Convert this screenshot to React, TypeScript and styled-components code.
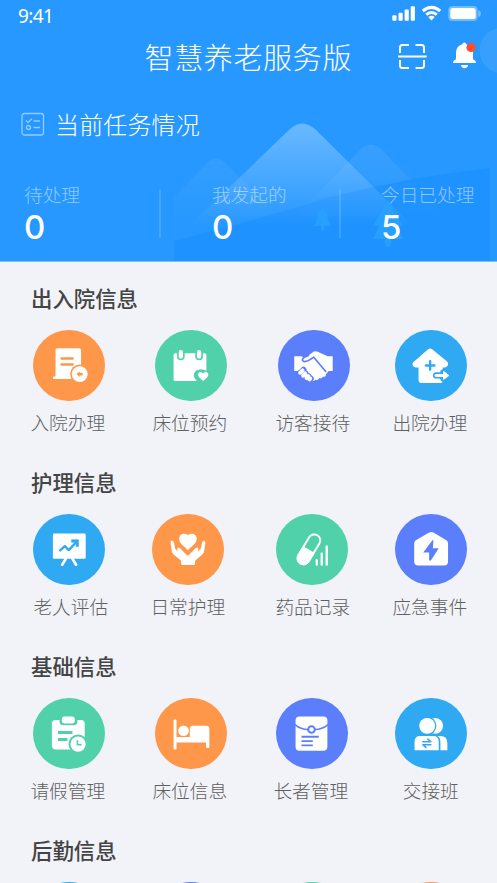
import React from "react";
import styled, { createGlobalStyle } from "styled-components";

const GlobalStyle = createGlobalStyle`
  * { box-sizing: border-box; }
  html, body { margin: 0; padding: 0; background: #f2f3f9; }
  body { font-family: "Noto Sans CJK SC", "Noto Sans", sans-serif; }
`;

const C = { orange: "#ff974b", green: "#50d1aa", indigo: "#5b7ffb", sky: "#2faaf2" };

const Screen = styled.div`
  width: 497px;
  height: 883px;
  overflow: hidden;
  background: #f2f3f9;
`;
const Header = styled.header`
  position: relative;
  height: 262px;
  background: #2698ff;
  color: #fff;
  overflow: hidden;
`;
const Scenery = styled.svg`
  position: absolute;
  inset: 0;
  display: block;
`;
const HeaderContent = styled.div`
  position: relative;
`;
const StatusBar = styled.div`
  display: flex;
  justify-content: space-between;
  height: 32px;
  padding: 0 15px 0 18px;
`;
const Clock = styled.span`
  font: 400 19px/32px "Noto Sans", sans-serif;
  letter-spacing: -0.6px;
`;
const StatusIcons = styled.svg`
  display: block;
  width: 92px;
  height: 32px;
`;
const TitleBar = styled.div`
  display: flex;
  align-items: flex-start;
  height: 50px;
  padding-left: 144.5px;
`;
const Title = styled.h1`
  margin: 0;
  width: 249.5px;
  font-size: 29px;
  line-height: 48px;
  font-weight: 300;
  letter-spacing: 0.65px;
  white-space: nowrap;
`;
const Actions = styled.svg`
  display: block;
  flex: none;
  width: 90px;
  height: 50px;
`;
const TaskHeading = styled.div`
  display: flex;
  align-items: center;
  height: 40px;
  margin-top: 22px;
  padding-left: 21px;
  gap: 10px;
`;
const TaskTitle = styled.h2`
  margin: 0;
  font-size: 24px;
  font-weight: 300;
  line-height: 40px;
  letter-spacing: 0.15px;
`;
const Stats = styled.div`
  display: grid;
  grid-template-columns: 135px 53px 127px 42px 1fr;
  margin-top: 37px;
  padding-left: 24px;
`;
const StatLabel = styled.div`
  font-size: 18.7px;
  line-height: 26px;
  font-weight: 300;
  color: rgba(255, 255, 255, 0.5);
  white-space: nowrap;
`;
const StatValue = styled.div`
  font: 500 33px/36px Inter, sans-serif;
  margin-top: 2px;
`;
const Divider = styled.div`
  width: 2px;
  height: 49px;
  margin-top: 8px;
  background: rgba(255, 255, 255, 0.14);
`;
const Sections = styled.main`
  padding: 20px 0 0 31px;
`;
const Section = styled.section`
  height: 184px;
`;
const SectionTitle = styled.h3`
  margin: 0;
  font-size: 21.4px;
  line-height: 32px;
  font-weight: 500;
  color: #444;
`;
const Row = styled.div<{ $gaps: string }>`
  display: grid;
  grid-template-columns: ${(p) => p.$gaps};
  padding-top: 15.5px;
`;
const Item = styled.div`
  width: 75.5px;
  display: flex;
  flex-direction: column;
  align-items: center;
`;
const Disc = styled.div<{ $color: string }>`
  width: 71.6px;
  height: 71.6px;
  border-radius: 50%;
  background: ${(p) => p.$color};
  color: ${(p) => p.$color};
  svg { display: block; width: 71.6px; height: 71.6px; }
`;
const Label = styled.div<{ $shift: number }>`
  margin: 6.9px 0 0 ${(p) => p.$shift}px;
  font-size: 18.7px;
  line-height: 28px;
  font-weight: 300;
  color: #606060;
  white-space: nowrap;
`;

const Glyph = ({ children }: { children: React.ReactNode }) => (
  <svg viewBox="0 0 216 216" fill="#fff" strokeLinecap="round" strokeLinejoin="round">{children}</svg>
);

const AdmitIcon = () => (
  <Glyph>
    <path d="M73 55H139Q145 55 145 61V148H64Q60 148 60 144T64 140H68V60Q68 55 73 55Z" />
    <path d="M86 86H120M86 104H120" stroke="currentColor" strokeWidth="7" />
    <circle cx="141" cy="133" r="29" fill="currentColor" />
    <circle cx="141" cy="133" r="24" />
    <path d="M131 133L141 125V130H150V137H141V142Z" fill="currentColor" />
  </Glyph>
);
const CalendarIcon = () => (
  <Glyph>
    <rect x="56" y="70" width="99" height="84" rx="5" />
    <g stroke="currentColor" strokeWidth="5">
      <rect x="69" y="58" width="18" height="31" rx="9" />
      <rect x="124" y="58" width="18" height="31" rx="9" />
    </g>
    <path d="M155 123C148 119 139 118 131 120C121 122 117 130 117 138C118 145 123 150 128 156H160Z" fill="currentColor" />
    <path d="M145 132C140 124 130 126 130 135C130 142 139 148 145 154C152 148 161 142 161 135C161 126 149 124 145 132Z" />
  </Glyph>
);
const HandshakeIcon = () => (
  <Glyph>
    <path d="M49 79H70L77 82L90 78L108 65Q112 63 118 65L150 79H165V124H153L144 134Q146 141 135 141Q133 148 125 145Q120 154 112 150Q108 156 103 153L100 145Q97 136 90 136Q86 126 77 126Q73 116 66 119L59 124H49Z" />
    <path d="M92 77L78 83Q69 91 78 95Q87 97 108 82L144 125" fill="none" stroke="currentColor" strokeWidth="5" />
    <path d="M65 132L77 120M74 140L83 131M84 147L92 139M94 152L99 147" stroke="currentColor" strokeWidth="18" />
    <path d="M67 129L74 122M76 138L82 131M86 145L91 139M95 149L97 146" stroke="#fff" strokeWidth="12" />
  </Glyph>
);
const DischargeIcon = () => (
  <Glyph>
    <path d="M100 58Q106 53 112 58L158 96Q165 109 151 113H144V153Q144 160 137 160H80Q71 160 71 151V113H62Q48 109 55 97Z" />
    <path d="M106 94V120M93 107H119" stroke="currentColor" strokeWidth="7" />
    <path d="M124 137H146V128L157 137L146 146" stroke="currentColor" strokeWidth="19" fill="currentColor" />
    <path d="M124 137H148" stroke="#fff" strokeWidth="9" />
    <path d="M147 126L161 137L147 148Z" stroke="#fff" strokeWidth="4" />
  </Glyph>
);
const BoardIcon = () => (
  <Glyph>
    <rect x="60" y="59" width="99" height="76" rx="4" />
    <path d="M99 135L88 153M119 135L130 153" stroke="#fff" strokeWidth="8" />
    <path d="M82 110L96 97L108 109L130 85" fill="none" stroke="currentColor" strokeWidth="7" />
    <path d="M117 78H137V98H130V85H117Z" fill="currentColor" stroke="currentColor" strokeWidth="2" />
  </Glyph>
);
const CareIcon = () => (
  <Glyph>
    <path d="M108 64C100 56 82 58 82 75C82 89 97 98 108 109C120 98 135 89 135 75C135 58 116 56 108 64Z" />
    <path d="M56 85Q56 80 61 81Q66 82 67 88L70 105L77 113Q74 101 80 101Q86 102 92 111L106 125H110L124 111Q132 101 137 101Q142 102 139 113L147 105L151 87Q152 81 157 81Q162 82 161 88L157 114Q156 119 151 123L130 141V149Q130 154 125 154H92Q88 154 88 149V141L66 123Q61 119 60 114Z" />
  </Glyph>
);
const PillIcon = () => (
  <Glyph>
    <g transform="rotate(31 99 107)">
      <rect x="81" y="57" width="36" height="99" rx="18" fill="none" stroke="#fff" strokeWidth="6" />
      <path d="M78 107H120V138A21 21 0 0 1 78 138Z" />
    </g>
    <path d="M123 139V153M138 120V153M153 98V153" stroke="#fff" strokeWidth="7" />
  </Glyph>
);
const EmergencyIcon = () => (
  <Glyph>
    <path d="M103 56Q109 52 116 56L155 79Q160 82 160 88V143Q160 155 148 155H70Q58 155 58 143V88Q58 82 63 79Z" />
    <path d="M113 79L85 116H103V140H108L132 103H114L116 79Z" fill="currentColor" />
  </Glyph>
);
const ClipboardIcon = () => (
  <Glyph>
    <rect x="57" y="66" width="99" height="89" rx="11" />
    <rect x="80" y="48" width="54" height="34" rx="11" fill="currentColor" />
    <rect x="87" y="56" width="39" height="21" rx="8" />
    <path d="M75 104H119M75 125H104" stroke="currentColor" strokeWidth="9" strokeLinecap="butt" />
    <circle cx="136" cy="139" r="29" fill="currentColor" />
    <circle cx="136" cy="139" r="23" />
    <path d="M134 129V141H145" fill="none" stroke="currentColor" strokeWidth="5" />
  </Glyph>
);
const BedIcon = () => (
  <Glyph>
    <rect x="56" y="65" width="9" height="90" rx="3" />
    <circle cx="86" cy="99" r="16" />
    <path d="M105 93Q105 84 114 84H155Q164 84 164 93V148Q164 151 161 151H157Q154 151 154 148V134H64V118H105Z" />
  </Glyph>
);
const RecordIcon = () => (
  <Glyph>
    <rect x="59" y="56" width="96" height="103" rx="12" />
    <path d="M58 81Q75 95 96 95H118Q139 95 156 81" fill="none" stroke="currentColor" strokeWidth="5" />
    <circle cx="107" cy="95" r="10" stroke="currentColor" strokeWidth="6" />
    <path d="M77 117H129M77 130H111M77 143H111" stroke="currentColor" strokeWidth="5.5" strokeLinecap="butt" />
  </Glyph>
);
const ShiftIcon = () => (
  <Glyph>
    <circle cx="121" cy="84" r="24" />
    <path d="M110 115H137Q158 115 158 137V158H110Z" />
    <path d="M75 112H116Q137 112 137 133V162H54V133Q54 112 75 112Z" fill="currentColor" />
    <circle cx="97" cy="84" r="28" fill="currentColor" />
    <circle cx="97" cy="84" r="24" />
    <path d="M76 115H115Q132 115 132 133V158H59V133Q59 115 76 115Z" />
    <path d="M84 132H108L99 124M108 141H84L93 149" fill="none" stroke="currentColor" strokeWidth="5" />
  </Glyph>
);

type Entry = { label: string; color: string; icon: React.ReactNode; shift?: number };
const sections: { title: string; gaps: string; items: Entry[] }[] = [
  {
    title: "出入院信息",
    gaps: "122px 123px 117px 76px",
    items: [
      { label: "入院办理", color: C.orange, icon: <AdmitIcon />, shift: -2 },
      { label: "床位预约", color: C.green, icon: <CalendarIcon />, shift: -2 },
      { label: "访客接待", color: C.indigo, icon: <HandshakeIcon />, shift: -2 },
      { label: "出院办理", color: C.sky, icon: <DischargeIcon />, shift: -2 },
    ],
  },
  {
    title: "护理信息",
    gaps: "119.5px 123.5px 119px 76px",
    items: [
      { label: "老人评估", color: C.sky, icon: <BoardIcon />, shift: 4 },
      { label: "日常护理", color: C.orange, icon: <CareIcon />, shift: -1 },
      { label: "药品记录", color: C.green, icon: <PillIcon />, shift: 2 },
      { label: "应急事件", color: C.indigo, icon: <EmergencyIcon />, shift: -2 },
    ],
  },
  {
    title: "基础信息",
    gaps: "122px 121px 119px 76px",
    items: [
      { label: "请假管理", color: C.green, icon: <ClipboardIcon />, shift: -2 },
      { label: "床位信息", color: C.orange, icon: <BedIcon />, shift: -2 },
      { label: "长者管理", color: C.indigo, icon: <RecordIcon />, shift: -2 },
      { label: "交接班", color: C.sky, icon: <ShiftIcon /> },
    ],
  },
  {
    title: "后勤信息",
    gaps: "122px 121px 119px 76px",
    items: [
      { label: "", color: C.sky, icon: null },
      { label: "", color: C.indigo, icon: null },
      { label: "", color: C.green, icon: null },
      { label: "", color: C.orange, icon: null },
    ],
  },
];

const HeaderScenery = () => (
  <Scenery width="497" height="262" viewBox="0 0 497 262">
    <defs>
      <linearGradient id="peak" gradientUnits="userSpaceOnUse" x1="0" y1="122" x2="0" y2="227">
        <stop offset="0" stopColor="#fff" stopOpacity=".32" />
        <stop offset="1" stopColor="#fff" stopOpacity="0" />
      </linearGradient>
      <linearGradient id="hill" gradientUnits="userSpaceOnUse" x1="0" y1="144" x2="0" y2="222">
        <stop offset="0" stopColor="#fff" stopOpacity=".08" />
        <stop offset="1" stopColor="#fff" stopOpacity="0" />
      </linearGradient>
    </defs>
    <circle cx="502.5" cy="50.5" r="23" fill="#fff" fillOpacity=".08" />
    <path d="M174 197L206 164Q216 154 226 164L285 222H174Z" fill="url(#hill)" />
    <path d="M290 222L361 149Q371 140 381 149L452 222Z" fill="url(#hill)" />
    <path d="M174 241Q250 222 330 197Q405 178 490 168V262H174Z" fill="#1b90ff" fillOpacity=".7" />
    <path d="M188 227L289 130Q302 117 316 130L414 227Z" fill="url(#peak)" />
    <g fill="#28a2ff" fillOpacity=".8">
      <path d="M322.5 206L329 216H327L331 226H324V230Q322.5 232 321 230V226H314L318 216H316Z" />
      <path d="M388 200L403 226H397L403 239H391V245Q388 250 385 245V239H373L379 226H373Z" />
    </g>
    <path d="M0 261.5H497" stroke="#7dbfff" strokeWidth="1" />
  </Scenery>
);

export default function App() {
  return (
    <>
      <GlobalStyle />
      <Screen>
        <Header>
          <HeaderScenery />
          <HeaderContent>
            <StatusBar>
              <Clock>9:41</Clock>
              <StatusIcons viewBox="390 0 92 32" fill="#fff">
                <rect x="392.3" y="15.2" width="4.2" height="5.6" rx="1" />
                <rect x="398.5" y="12.8" width="4.2" height="8" rx="1" />
                <rect x="404.6" y="9.5" width="4.2" height="11.3" rx="1" />
                <rect x="410.7" y="6.3" width="4.2" height="14.5" rx="1" />
                <g fill="none" stroke="#fff" strokeWidth="3">
                  <path d="M422.8 11Q431.5 3.7 440.2 11" />
                  <path d="M426.2 14.6Q431.5 10.3 436.8 14.6" />
                </g>
                <path d="M431.5 20.4L428.3 17Q431.5 14.7 434.7 17Z" />
                <rect x="448.3" y="6" width="29.2" height="15" rx="4" fillOpacity=".35" />
                <rect x="450.3" y="8" width="25.4" height="11" rx="2.5" />
                <path d="M478.3 10Q481 11 481 13.5T478.3 17Z" fillOpacity=".4" />
              </StatusIcons>
            </StatusBar>
            <TitleBar>
              <Title>智慧养老服务版</Title>
              <Actions viewBox="394 32 90 50">
                <path d="M400 53V47.5Q400 45 402.5 45H409M415.5 45H421.5Q424 45 424 47.5V53M400 60V65.5Q400 68 402.5 68H409M415.5 68H421.5Q424 68 424 65.5V60M398 56.5H426.7" fill="none" stroke="#fff" strokeWidth="2" />
                <path d="M464.3 42.5Q466 42.5 466.3 44.3Q473 46 473 53V58.5Q473 60 475 60.5Q476 61 476 63H453Q453 61 454 60.5Q456 60 456 58.5V53Q456 46 462.4 44.3Q462.7 42.5 464.3 42.5ZM461 65H468Q467.5 68.3 464.5 68.3T461 65Z" fill="#fff" />
                <circle cx="471" cy="47.5" r="4.6" fill="#ff4d2e" />
              </Actions>
            </TitleBar>
            <TaskHeading>
              <svg width="24" height="24" viewBox="0 0 24 24" fill="none" stroke="#fff" strokeOpacity=".5" strokeWidth="1.3">
                <rect x="1" y="1.5" width="21.5" height="21.5" rx="2.5" />
                <path d="M5 8.5L7 10.5L11 6.8M12.5 9H19M12.5 15.5H19" />
                <circle cx="7.5" cy="15.5" r="2" />
              </svg>
              <TaskTitle>当前任务情况</TaskTitle>
            </TaskHeading>
            <Stats>
              <div><StatLabel>待处理</StatLabel><StatValue>0</StatValue></div>
              <Divider />
              <div><StatLabel>我发起的</StatLabel><StatValue>0</StatValue></div>
              <Divider />
              <div><StatLabel>今日已处理</StatLabel><StatValue>5</StatValue></div>
            </Stats>
          </HeaderContent>
        </Header>
        <Sections>
          {sections.map((s) => (
            <Section key={s.title}>
              <SectionTitle>{s.title}</SectionTitle>
              <Row $gaps={s.gaps}>
                {s.items.map((it, i) => (
                  <Item key={i}>
                    <Disc $color={it.color}>{it.icon}</Disc>
                    <Label $shift={it.shift ?? 0}>{it.label}</Label>
                  </Item>
                ))}
              </Row>
            </Section>
          ))}
        </Sections>
      </Screen>
    </>
  );
}
